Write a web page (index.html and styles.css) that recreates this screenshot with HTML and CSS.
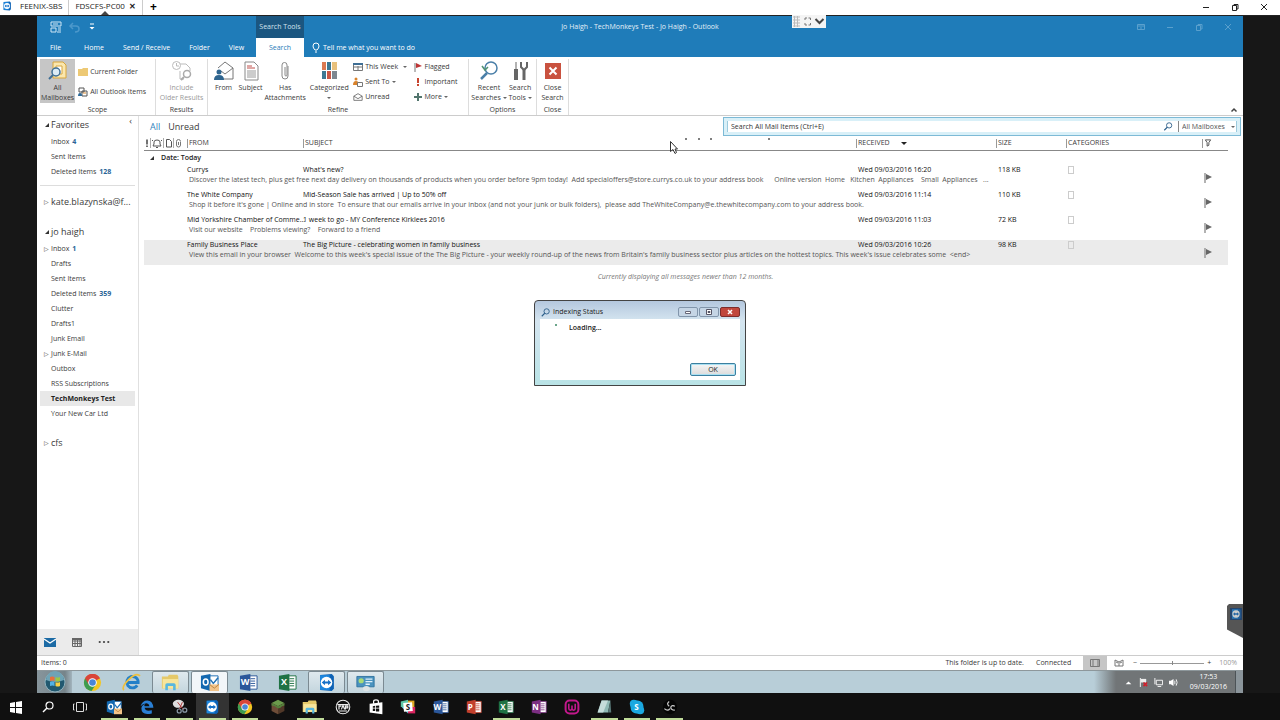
FILE: index.html
```
<!DOCTYPE html>
<html lang="en">
<head>
    <meta charset="UTF-8">
    <meta name="viewport" content="width=device-width, initial-scale=1.0">
    <title>FDSCFS-PC00</title>
    <link rel="stylesheet" href="styles.css">
</head>
<body>

    <!-- shared icons -->
    <svg class="sprite" aria-hidden="true">
        <symbol id="tv" viewBox="0 0 18 18">
            <path d="M3 2l11-1 2 2v12l-2 2-11-1z" fill="#0d62b5"/>
            <path d="M3 2l9 0v14l-9 0z" fill="#1e87de"/>
            <circle cx="9" cy="9" r="5.5" fill="#fff"/>
            <path d="M4.500 9l3-2.500v1.500h3V6.500l3 2.500-3 2.500V10h-3v1.500z" fill="#1470c8"/>
        </symbol>
        <symbol id="chrome" viewBox="0 0 20 20">
            <circle cx="10" cy="10" r="9" fill="#f3c622"/>
            <path d="M10 10L2.200 5.500A9 9 0 0 1 17.800 5.500z" fill="#d9453a"/>
            <path d="M10 10L2.200 5.500A9 9 0 0 0 9 19l4-6z" fill="#3d9c50"/>
            <path d="M10 5.500h7.800A9 9 0 0 0 2.200 5.500L6 12z" fill="#d9453a"/>
            <circle cx="10" cy="10" r="4.500" fill="#fff"/>
            <circle cx="10" cy="10" r="3.500" fill="#4a86d8"/>
        </symbol>
        <symbol id="folder" viewBox="0 0 22 20">
            <path d="M1 3h7l1-2h10l1 2v14H1z" fill="#e5c96a"/>
            <path d="M2 6h18v11H2z" fill="#f7e59b"/>
            <path d="M5 19v-6q0-2 2-2h8q2 0 2 2v6h-3v-5H8v5z" fill="#58b7df"/>
        </symbol>
        <symbol id="outlook" viewBox="0 0 20 20">
            <path d="M9 3h10v12H9z" fill="#fff" stroke="#1d6fb4"/>
            <path d="M11 7l3 4 5-6" fill="none" stroke="#1d6fb4" stroke-width="1.500"/>
            <path d="M1 3l10-2v18L1 16z" fill="#1268b0"/>
            <ellipse cx="6" cy="9.500" rx="2.500" ry="3.200" fill="none" stroke="#fff" stroke-width="1.600"/>
            <path d="M10 12h10v7H10z" fill="#f2c48a"/>
            <path d="M10 12l5 4 5-4" fill="none" stroke="#b98545"/>
        </symbol>
        <symbol id="sheet" viewBox="0 0 20 20">
            <path d="M10 3h9v14h-9z" fill="#fff" stroke="currentColor"/>
            <path d="M12 6h5M12 8.500h5M12 11h5M12 13.500h5" stroke="currentColor"/>
            <path d="M1 3l11-2v18L1 17z" fill="currentColor"/>
        </symbol>
        <symbol id="lens" viewBox="0 0 12 12">
            <circle cx="7.500" cy="4.500" r="3.500" fill="none" stroke="currentColor" stroke-width="1.200"/>
            <path d="M5 7L1 11" stroke="currentColor" stroke-width="1.500"/>
        </symbol>
        <symbol id="flag" viewBox="0 0 8 10">
            <path d="M1 0v10" stroke="#999" stroke-width="1.500"/>
            <path d="M2 1l6 3-6 3z" fill="#666"/>
        </symbol>
        <symbol id="min" viewBox="0 0 8 8"><path d="M1 4.500h6" stroke="currentColor"/></symbol>
        <symbol id="max" viewBox="0 0 8 8"><path d="M1.500 2.500h4v5h-4zM3 2.500v-1h4v4.500H5.500" fill="none" stroke="currentColor"/></symbol>
        <symbol id="close" viewBox="0 0 8 8"><path d="M1 1l6 6M7 1L1 7" stroke="currentColor"/></symbol>
        <symbol id="envelope" viewBox="0 0 12 10">
            <path d="M1 4l5-3 5 3v5H1zM1 4l5 3 5-3" fill="#fff" stroke="#666"/>
        </symbol>
    </svg>

    <header class="viewer-bar">
        <svg class="viewer-logo"><use href="#tv"/></svg>
        <a class="viewer-tab" href="#">FEENIX-SBS</a>
        <a class="viewer-tab current" href="#">FDSCFS-PC00 <b>&#10005;</b></a>
        <button class="new-tab" aria-label="New tab">+</button>
        <div class="viewer-controls">
            <button aria-label="Minimize"><svg><use href="#min"/></svg></button>
            <button aria-label="Restore"><svg><use href="#max"/></svg></button>
            <button aria-label="Close"><svg><use href="#close"/></svg></button>
        </div>
    </header>

    <div class="stage">
        <div class="remote">

            <div class="title-area">
                <h1>Jo Haigh - TechMonkeys Test - Jo Haigh - Outlook</h1>
                <div class="quick">
                    <svg viewBox="0 0 12 12"><path d="M1 1h10v4H1zM1 7h5v4H1zM8 7h3M8 9h3M7 11h4M3 3h5" fill="none" stroke="#cfe6f5"/></svg>
                    <svg viewBox="0 0 12 12"><path d="M2 5h6q3 0 3 3t-4 3M5 2L2 5l3 3" fill="none" stroke="#4c98cb" stroke-width="1.500"/></svg>
                    <svg viewBox="0 0 12 12"><path d="M4 3h4" stroke="#fff"/><path d="M3.500 6h5L6 8.500z" fill="#fff"/></svg>
                </div>
                <span class="context">Search Tools</span>
                <div class="window-controls">
                    <svg viewBox="0 0 8 8"><path d="M.5 1.500h7v5h-7zM.5 3h7M4 6V4" fill="none" stroke="currentColor"/></svg>
                    <svg><use href="#min"/></svg>
                    <svg><use href="#max"/></svg>
                    <svg><use href="#close"/></svg>
                </div>
                <nav class="tabs">
                    <a href="#">File</a>
                    <a href="#">Home</a>
                    <a href="#">Send / Receive</a>
                    <a href="#">Folder</a>
                    <a href="#">View</a>
                </nav>
                <a class="active-tab" href="#">Search</a>
                <a class="tell" href="#">
                    <svg viewBox="0 0 8 12"><path d="M3 8Q1 6 1 4a3 3 0 0 1 6 0q0 2-2 4zM3 10h2" fill="none" stroke="#fff"/></svg>
                    Tell me what you want to do
                </a>
            </div>

            <div class="ribbon">
                <section class="group scope">
                    <div class="tools">
                        <button class="big pressed">
                            <svg viewBox="0 0 20 20"><path d="M5 1h10l3 3v13H5z" fill="#fbe7ae" stroke="#d8a63c"/><path d="M8 5h6v8H8z" fill="#fff" stroke="#d8a63c"/><circle cx="8" cy="11" r="4" fill="#dcecf5" stroke="#3f6f95" stroke-width="1.500"/><path d="M5 14l-4 4" stroke="#3f6f95" stroke-width="2"/></svg>
                            <span>All<br>Mailboxes</span>
                        </button>
                        <div class="stack two">
                            <button><svg viewBox="0 0 10 10"><path d="M0 2h4l1-1h5v8H0z" fill="#edc975"/></svg>Current Folder</button>
                            <button><svg viewBox="0 0 10 10"><path d="M1 1h5v4H1zM4 4h5v5H4z" fill="#fff" stroke="#555"/><path d="M0 9q0-3 2-3t2 3z" fill="#2d6a99"/><path d="M5 6h3" stroke="#d88a30"/></svg>All Outlook Items</button>
                        </div>
                    </div>
                    <h2>Scope</h2>
                </section>
                <section class="group results">
                    <div class="tools">
                        <button class="big" disabled>
                            <svg viewBox="0 0 20 20"><path d="M8 3h6l4 4v3M8 10v8h4" fill="none" stroke="#bbb"/><circle cx="4.500" cy="4.500" r="4" fill="#fff" stroke="#bbb"/><path d="M4.500 2v3H7" fill="none" stroke="#bbb"/><circle cx="15" cy="13" r="3.500" fill="#fff" stroke="#aaa" stroke-width="1.500"/><path d="M12 16l-3 3" stroke="#aaa" stroke-width="2"/></svg>
                            <span>Include<br>Older Results</span>
                        </button>
                    </div>
                    <h2>Results</h2>
                </section>
                <section class="group refine">
                    <div class="tools">
                        <button class="big">
                            <svg viewBox="0 0 20 20"><path d="M4 7l7-6 8 6v11H7" fill="#fff" stroke="#777"/><path d="M19 7l-8 6-4-3" fill="none" stroke="#777"/><circle cx="5" cy="11" r="2.500" fill="#2f658f"/><path d="M0 19q0-5 5-5t5 5z" fill="#2f658f"/></svg>
                            <span>From</span>
                        </button>
                        <button class="big">
                            <svg viewBox="0 0 20 20"><path d="M4 1h9l4 4v14H4z" fill="#fff" stroke="#888"/><path d="M6 5h5M6 7h8" stroke="#c0504d"/><path d="M6 10h9M6 12h9M6 14h9M6 16h9" stroke="#999"/></svg>
                            <span>Subject</span>
                        </button>
                        <button class="big">
                            <svg viewBox="0 0 20 20"><path d="M13 5v10a3 3 0 0 1-6 0V4a2.500 2.500 0 0 1 5 0v10a1 1 0 0 1-2 0V6" fill="none" stroke="#888"/></svg>
                            <span>Has<br>Attachments</span>
                        </button>
                        <button class="big">
                            <svg viewBox="0 0 20 20"><path d="M3 1h4v8H3z" fill="#dc7a52"/><path d="M8 1h4v8H8zM3 10h4v8H3z" fill="#3d7892"/><path d="M13 1h5v8h-5z" fill="#e8c17d"/><path d="M8 10h4v8H8z" fill="#ca5745"/><path d="M13 10h5v8h-5z" fill="#7d8790"/></svg>
                            <span>Categorized<br><i class="caret"></i></span>
                        </button>
                        <div class="stack">
                            <button><svg viewBox="0 0 10 10"><path d="M.5 1.500h9v7h-9zM0 5h10M5 4v4" fill="#fff" stroke="#777"/><path d="M0 1h10v2H0z" fill="#3f6f95"/></svg>This Week <i class="caret away"></i></button>
                            <button><svg viewBox="0 0 10 10"><circle cx="3" cy="2" r="1.500" fill="#d9822b"/><path d="M0 8q0-4 3-4t3 4z" fill="#d9822b"/><path d="M4.500 5.500h5v4h-5z" fill="#fff" stroke="#777"/></svg>Sent To <i class="caret"></i></button>
                            <button><svg viewBox="0 0 12 10"><use href="#envelope"/></svg>Unread</button>
                        </div>
                        <div class="stack">
                            <button><svg viewBox="0 0 10 10"><path d="M2 1v9" stroke="#777"/><path d="M3 1l6 3-6 2z" fill="#bd3535"/></svg>Flagged</button>
                            <button><svg viewBox="0 0 10 10"><path d="M4 1h2v5H4zM4 7h2v2H4z" fill="#c8452f"/></svg>Important</button>
                            <button><svg viewBox="0 0 10 10"><path d="M5 1v8M1 5h8" stroke="#52756d" stroke-width="2"/></svg>More <i class="caret"></i></button>
                        </div>
                    </div>
                    <h2>Refine</h2>
                </section>
                <section class="group options">
                    <div class="tools">
                        <button class="big">
                            <svg viewBox="0 0 20 20"><circle cx="12" cy="7" r="6" fill="#fff" stroke="#4a7fa8" stroke-width="1.500"/><path d="M8 12l-6 6" stroke="#4a7fa8" stroke-width="2.500"/><path d="M3 5l3 4 3-3" fill="none" stroke="#4f9272" stroke-width="1.500"/></svg>
                            <span>Recent<br>Searches <i class="caret"></i></span>
                        </button>
                        <button class="big">
                            <svg viewBox="0 0 20 20"><path d="M6 1v8" stroke="#666"/><path d="M4 8h4v11H4z" fill="#666"/><path d="M14 8v11" stroke="#666" stroke-width="3"/><path d="M11 1v5l3 3 3-3V1" fill="none" stroke="#666" stroke-width="2"/></svg>
                            <span>Search<br>Tools <i class="caret"></i></span>
                        </button>
                    </div>
                    <h2>Options</h2>
                </section>
                <section class="group finish">
                    <div class="tools">
                        <button class="big">
                            <svg viewBox="0 0 20 20"><path d="M2 2h16v16H2z" fill="#c9523f"/><path d="M6.500 6.500l7 7M13.500 6.500l-7 7" stroke="#fff" stroke-width="2"/></svg>
                            <span>Close<br>Search</span>
                        </button>
                    </div>
                    <h2>Close</h2>
                </section>
                <button class="collapse" aria-label="Collapse the ribbon"><svg viewBox="0 0 8 8"><path d="M1.500 5.500L4 3l2.500 2.500" fill="none" stroke="#444" stroke-width="1.500"/></svg></button>
            </div>

            <div class="workspace">
                <nav class="folders">
                    <button class="fold" aria-label="Minimize the folder pane">&#8249;</button>
                    <h3 class="open">Favorites</h3>
                    <ul>
                        <li><a href="#">Inbox <b>4</b></a></li>
                        <li><a href="#">Sent Items</a></li>
                        <li><a href="#">Deleted Items <b>128</b></a></li>
                    </ul>
                    <hr>
                    <h3 class="closed">kate.blazynska@f...</h3>
                    <h3 class="open account">jo haigh</h3>
                    <ul>
                        <li class="closed"><a href="#">Inbox <b>1</b></a></li>
                        <li><a href="#">Drafts</a></li>
                        <li><a href="#">Sent Items</a></li>
                        <li><a href="#">Deleted Items <b>359</b></a></li>
                        <li><a href="#">Clutter</a></li>
                        <li><a href="#">Drafts1</a></li>
                        <li><a href="#">Junk Email</a></li>
                        <li class="closed"><a href="#">Junk E-Mail</a></li>
                        <li><a href="#">Outbox</a></li>
                        <li><a href="#">RSS Subscriptions</a></li>
                        <li class="selected"><a href="#">TechMonkeys Test</a></li>
                        <li><a href="#">Your New Car Ltd</a></li>
                    </ul>
                    <h3 class="closed account">cfs</h3>
                    <div class="modules">
                        <svg viewBox="0 0 12 10"><path d="M0 1h12v9H0z" fill="#1c6ba5"/><path d="M0 2l6 4 6-4" fill="none" stroke="#fff" stroke-width="1.200"/></svg>
                        <svg viewBox="0 0 12 10"><path d="M1.500 1.500h9v8h-9zM1 4h10M1 6.500h10M4 2v7M6.500 2v7M9 2v7" fill="none" stroke="#666"/><path d="M1 1h10v2H1z" fill="#666"/></svg>
                        <svg viewBox="0 0 14 10"><circle cx="2" cy="5" r="1.300" fill="#444"/><circle cx="7" cy="5" r="1.300" fill="#444"/><circle cx="12" cy="5" r="1.300" fill="#444"/></svg>
                    </div>
                </nav>

                <main>
                    <div class="filter-row">
                        <a class="on" href="#">All</a>
                        <a href="#">Unread</a>
                        <div class="search">
                            <input type="text" aria-label="Search" placeholder="Search All Mail Items (Ctrl+E)">
                            <svg><use href="#lens"/></svg>
                            <select aria-label="Search scope"><option>All Mailboxes</option></select>
                            <span class="drop"><i class="caret"></i></span>
                        </div>
                    </div>

                    <table>
                        <colgroup>
                            <col class="c-icons"><col class="c-from"><col><col class="c-received"><col class="c-size"><col class="c-categories"><col class="c-flag">
                        </colgroup>
                        <thead>
                            <tr>
                                <th class="marks"><svg viewBox="0 0 42 10"><path d="M3 1.500v5M3 7.500v1.500" stroke="#444" stroke-width="1.500"/><path d="M6.500 0v10M19.500 0v10M29.500 0v10" stroke="#aaa"/><path d="M9 8h8l-1-2V4q0-2-3-2t-3 2v2zM12 9.500h2M8 2l1 1M18 2l-1 1" fill="none" stroke="#555"/><path d="M22.500 1.500h3l2 2v5.500h-5z" fill="none" stroke="#555"/><path d="M36.500 4v3a1.500 1.500 0 0 1-4 0V3.500a1.500 1.500 0 0 1 4 0M34.500 4v3" fill="none" stroke="#777"/></svg></th>
                                <th>FROM</th>
                                <th>SUBJECT</th>
                                <th>RECEIVED <i class="caret sort"></i></th>
                                <th>SIZE</th>
                                <th>CATEGORIES</th>
                                <th><svg class="funnel" viewBox="0 0 8 9"><path d="M1 1h6L5 4v3L3 8V4z" fill="none" stroke="#444"/></svg></th>
                            </tr>
                        </thead>
                        <tbody class="date">
                            <tr><th colspan="7">Date: Today</th></tr>
                        </tbody>
                        <tbody>
                            <tr>
                                <td rowspan="2"></td><td>Currys</td><td>What's new?</td><td>Wed 09/03/2016 16:20</td><td>118 KB</td><td><i class="category"></i></td>
                                <td rowspan="2"><svg class="flag"><use href="#flag"/></svg></td>
                            </tr>
                            <tr class="preview"><td colspan="5">Discover the latest tech, plus get free next day delivery on thousands of products when you order before 9pm today!  Add specialoffers@store.currys.co.uk to your address book      Online version  Home   Kitchen  Appliances    Small  Appliances   ...</td></tr>
                        </tbody>
                        <tbody>
                            <tr>
                                <td rowspan="2"></td><td>The White Company</td><td>Mid-Season Sale has arrived | Up to 50% off</td><td>Wed 09/03/2016 11:14</td><td>110 KB</td><td><i class="category"></i></td>
                                <td rowspan="2"><svg class="flag"><use href="#flag"/></svg></td>
                            </tr>
                            <tr class="preview"><td colspan="5">Shop it before it's gone | Online and in store  To ensure that our emails arrive in your inbox (and not your junk or bulk folders),  please add TheWhiteCompany@e.thewhitecompany.com to your address book.</td></tr>
                        </tbody>
                        <tbody>
                            <tr>
                                <td rowspan="2"></td><td>Mid Yorkshire Chamber of Comme...</td><td>1 week to go - MY Conference Kirklees 2016</td><td>Wed 09/03/2016 11:03</td><td>72 KB</td><td><i class="category"></i></td>
                                <td rowspan="2"><svg class="flag"><use href="#flag"/></svg></td>
                            </tr>
                            <tr class="preview"><td colspan="5">Visit our website    Problems viewing?    Forward to a friend</td></tr>
                        </tbody>
                        <tbody class="selected">
                            <tr>
                                <td rowspan="2"></td><td>Family Business Place</td><td>The Big Picture - celebrating women in family business</td><td>Wed 09/03/2016 10:26</td><td>98 KB</td><td><i class="category"></i></td>
                                <td rowspan="2"><svg class="flag"><use href="#flag"/></svg></td>
                            </tr>
                            <tr class="preview"><td colspan="5">View this email in your browser  Welcome to this week's special issue of the The Big Picture - your weekly round-up of the news from Britain's family business sector plus articles on the hottest topics. This week's issue celebrates some  &lt;end&gt;</td></tr>
                        </tbody>
                    </table>
                    <p class="notice">Currently displaying all messages newer than 12 months.</p>
                </main>
            </div>

            <footer class="status">
                <span>Items: 0</span>
                <span class="sync">This folder is up to date.</span>
                <span>Connected</span>
                <div class="views">
                    <button class="pressed" aria-label="Normal view"><svg viewBox="0 0 10 8"><path d="M.5 .5h9v7h-9zM3 1v6M8 1v6" fill="none" stroke="#777"/></svg></button>
                    <button aria-label="Reading view"><svg viewBox="0 0 10 8"><path d="M1 1l4 2 4-2v6H1zM5 3v4M2 3l2 1M8 3L6 4" fill="none" stroke="#777"/></svg></button>
                </div>
                <span>&#8722;</span>
                <input type="range" aria-label="Zoom" min="10" max="190" value="100">
                <span>+</span>
                <span class="percent">100%</span>
            </footer>

            <div class="seven-bar">
                <button class="start" aria-label="Start"><svg viewBox="0 0 22 22"><circle cx="11" cy="11" r="10" fill="#21586f" stroke="#8fb3bf"/><path d="M2 9a9 9 0 0 1 18 0q-9 4-18 0z" fill="#6fa3b5"/><path d="M6 6q2-1 4.500 0v4q-2-1-4.500 0z" fill="#e8703a"/><path d="M11.500 6q2 1 4.500 0v4q-2 1-4.500 0z" fill="#9cc843"/><path d="M6 11q2-1 4.500 0v4q-2-1-4.500 0z" fill="#51b1e5"/><path d="M11.500 11q2 1 4.500 0v4q-2 1-4.500 0z" fill="#f6cf45"/></svg></button>
                <button aria-label="Chrome"><svg><use href="#chrome"/></svg></button>
                <button aria-label="Internet Explorer"><svg viewBox="0 0 20 20"><path d="M16 13a6 6 0 1 1 1-3H6" fill="none" stroke="#2380c8" stroke-width="3"/><path d="M2 18Q-1 15 7 7T19 3" fill="none" stroke="#edbf3c" stroke-width="1.800"/></svg></button>
                <button class="running" aria-label="Explorer"><svg><use href="#folder"/></svg></button>
                <button class="running front" aria-label="Outlook"><svg><use href="#outlook"/></svg></button>
                <button aria-label="Word"><svg class="word"><use href="#sheet"/></svg><em>W</em></button>
                <button aria-label="Excel"><svg class="excel"><use href="#sheet"/></svg><em>X</em></button>
                <button class="running" aria-label="TeamViewer"><svg><use href="#tv"/></svg></button>
                <button class="running" aria-label="Control Panel"><svg viewBox="0 0 22 20"><path d="M1 3h20v12H1z" fill="#4b93bf" stroke="#2b6f9c"/><circle cx="6" cy="8" r="3" fill="#a9db76"/><path d="M11 6h8M11 9h8M11 12h5" stroke="#dff1fa" stroke-width="1.500"/><ellipse cx="12" cy="17" rx="4" ry="3" fill="#dde3e5"/></svg></button>
                <div class="tray">
                    <svg viewBox="0 0 8 8"><path d="M1.500 5.500L4 3l2.500 2.500z" fill="#fff"/></svg>
                    <svg viewBox="0 0 10 10"><path d="M1.500 0v10" stroke="#fff"/><path d="M2 1h6v4H2z" fill="#eee"/><path d="M5 5l4 4M9 5L5 9" stroke="#d3202c" stroke-width="1.800"/></svg>
                    <svg viewBox="0 0 10 10"><path d="M2.500 2.500h7v5h-7zM4 9.500h4M1 0v7" fill="none" stroke="#fff"/></svg>
                    <svg viewBox="0 0 10 10"><path d="M0 3h2l3-2v8L2 7H0z" fill="#fff"/><path d="M6.500 3v4M8 1.500q2 3.500 0 7" fill="none" stroke="#fff"/></svg>
                    <time>17:53<br>09/03/2016</time>
                </div>
                <button class="peek" aria-label="Show desktop"></button>
            </div>

            <!-- floating things over the desktop -->
            <div class="session-menu">
                <svg viewBox="0 0 34 12"><path d="M1 2h7M1 5h7M1 8h7M1 11h7M2.500 1v11M5.500 1v11" stroke="#bbb"/><path d="M13 5V3h2M16.500 3h2v2M13 8v2h2M18.500 8v2h-2" fill="none" stroke="#777"/><path d="M23.500 4l4 4 4-4" fill="none" stroke="#444" stroke-width="2"/></svg>
            </div>
            <svg class="progress-dots" viewBox="0 0 86 2"><path d="M0 1h2M13 1h2M25 1h2M83 1h2" stroke="#555" stroke-width="1.500"/></svg>
            <svg class="pointer" viewBox="0 0 8 13"><path d="M.5 .5v10l2.500-2 2 4 1.500-1-1.500-3.500h2.500z" fill="#fff" stroke="#333"/></svg>
            <div class="side-handle"><svg><use href="#tv"/></svg></div>

            <div class="dialog" role="dialog" aria-labelledby="dialog-title">
                <div class="dialog-bar">
                    <svg><use href="#lens"/></svg>
                    <span id="dialog-title">Indexing Status</span>
                    <button aria-label="Minimize"><svg viewBox="0 0 10 8"><path d="M2.500 3.500h5v2h-5z" fill="#fff" stroke="#667"/></svg></button>
                    <button aria-label="Maximize"><svg viewBox="0 0 10 8"><path d="M2.500 1.500h5v5h-5zM4 3.500h2v1H4z" fill="#fff" stroke="#556"/></svg></button>
                    <button class="shut" aria-label="Close"><svg viewBox="0 0 10 8"><path d="M3 2l4 4M7 2L3 6" stroke="#fff" stroke-width="1.500"/></svg></button>
                </div>
                <div class="dialog-body">
                    <p><i></i>Loading...</p>
                    <button>OK</button>
                </div>
            </div>
        </div>
    </div>

    <footer class="ten-bar">
        <div class="system">
            <button aria-label="Start"><svg viewBox="0 0 16 16"><path d="M2 4l5-1v5H2zM8 3l6-1v6H8zM2 9h5v5l-5-1zM8 9h6v6l-6-1z" fill="#fff"/></svg></button>
            <button aria-label="Search"><svg class="white"><use href="#lens"/></svg></button>
            <button aria-label="Task view"><svg viewBox="0 0 16 16"><path d="M4.500 3.500h7v9h-7zM2.500 5h-1v6h1M13.500 5h1v6h-1" fill="none" stroke="#ddd"/></svg></button>
        </div>
        <div class="apps">
            <button class="running" aria-label="Outlook"><svg><use href="#outlook"/></svg></button>
            <button class="running" aria-label="Edge"><svg viewBox="0 0 20 20"><path d="M2 9Q4 2 10.500 2T18 11H7q1 5 9 3v4Q3 21 3 12q0-4 5-6-2 2-1 3h6q-1-4-5-3.500T2 9z" fill="#2a7fd4"/></svg></button>
            <button class="running" aria-label="Snipping Tool"><svg viewBox="0 0 20 20"><ellipse cx="8" cy="6" rx="7" ry="5" fill="#dedede"/><path d="M7 4l7 9M13 4l-4 9" stroke="#a33" stroke-width="1.200"/><circle cx="9" cy="15" r="2.500" fill="none" stroke="#8b9aa8" stroke-width="1.500"/><circle cx="16" cy="14" r="2.500" fill="none" stroke="#8b9aa8" stroke-width="1.500"/></svg></button>
            <button class="running front" aria-label="TeamViewer"><svg><use href="#tv"/></svg></button>
            <button class="running" aria-label="Chrome"><svg><use href="#chrome"/></svg></button>
            <button aria-label="Minecraft"><svg viewBox="0 0 20 20"><path d="M2 5l8-4 8 4-8 4z" fill="#6b9a4b"/><path d="M2 5l8 4v10l-8-4z" fill="#6e4d38"/><path d="M18 5l-8 4v10l8-4z" fill="#513828"/><path d="M2 5l8 4 8-4v3l-3 1-2 2-3 1-4-3-4-1z" fill="#55803c"/></svg></button>
            <button class="running" aria-label="Explorer"><svg><use href="#folder"/></svg></button>
            <button aria-label="Tap"><svg viewBox="0 0 20 20"><circle cx="10" cy="10" r="8.500" fill="none" stroke="#eee" stroke-width="1.300"/><path d="M3 7h14M5 13V9h3M10 8l-2 5M10 8l2 5M13 13V9h3v2h-3M5 15h10" fill="none" stroke="#eee" stroke-width="1.500"/></svg></button>
            <button aria-label="Store"><svg viewBox="0 0 20 20"><path d="M2 6l16-2v15L2 17z" fill="#fff"/><path d="M7 6V3q0-2 3-2t3 2v2" fill="none" stroke="#fff" stroke-width="1.500"/><path d="M6 9l3-.5V11H6zM10 8.500l4-.5v3h-4zM6 12h3v3H6zM10 12h4v3.500h-4z" fill="#111"/></svg></button>
            <button aria-label="Slack"><svg viewBox="0 0 20 20"><path d="M1 3l9-2v9H1z" fill="#5ec7a6"/><path d="M10 2h8v8h-8z" fill="#dfa823"/><path d="M2 10h8v8z" fill="#66c7e0"/><path d="M10 10h9v8h-9z" fill="#da2560"/><path d="M4 5l11-1 1 11-11 1z" fill="#fff"/></svg><em class="dark">S</em></button>
            <button aria-label="Word"><svg class="word"><use href="#sheet"/></svg><em>W</em></button>
            <button aria-label="PowerPoint"><svg class="point"><use href="#sheet"/></svg><em>P</em></button>
            <button class="running" aria-label="Excel"><svg class="excel"><use href="#sheet"/></svg><em>X</em></button>
            <button aria-label="OneNote"><svg class="note"><use href="#sheet"/></svg><em>N</em></button>
            <button aria-label="WampServer"><svg viewBox="0 0 20 20"><rect x="2" y="2" width="16" height="16" rx="5" fill="none" stroke="#c2188b" stroke-width="2.500"/><path d="M6 6v6q0 2 2 2t2-2V8v4q0 2 2 2t2-2V6" fill="none" stroke="#c2188b" stroke-width="2"/></svg></button>
            <button class="running" aria-label="Notepad"><svg viewBox="0 0 20 20"><path d="M7 2h11l-3 15H2z" fill="#8fb9b5"/><path d="M7 2h8L9 17H2z" fill="#c5dddb"/><path d="M15 17l3-15 1 15z" fill="#5a7a79"/></svg></button>
            <button class="running" aria-label="Skype"><svg viewBox="0 0 20 20"><rect x="2" y="2" width="16" height="16" rx="7" fill="#1ba8e0"/><circle cx="6" cy="6" r="5" fill="#1ba8e0"/><circle cx="14" cy="14" r="5" fill="#1ba8e0"/></svg><em class="wide">S</em></button>
            <button class="running" aria-label="OBS"><svg viewBox="0 0 20 20"><circle cx="10" cy="10" r="9" fill="#050505"/><path d="M9 3q-4 3 0 6M16 9q-3-2-5 1 0 4 5 4M3 12q4 4 7 0" fill="none" stroke="#ccc" stroke-width="1.500"/></svg></button>
        </div>
    </footer>

</body>
</html>
```

FILE: styles.css
```
* {
    box-sizing: border-box;
}
html, body {
    height: 100%;
    margin: 0;
}
body {
    display: flex;
    flex-direction: column;
    background: #171717;
    color: #3a3a3a;
    font: 7px/10px "Open Sans", "Noto Sans", sans-serif;
    overflow: hidden;
}
a {
    color: inherit;
    text-decoration: none;
}
button {
    margin: 0;
    padding: 0;
    border: 0;
    background: none;
    color: inherit;
    font: inherit;
}
h1, h2, h3, p, ul {
    margin: 0;
    padding: 0;
    font-size: inherit;
    font-weight: normal;
    list-style: none;
}
svg {
    display: block;
    flex: none;
    width: 12px;
    height: 12px;
}
.sprite {
    position: absolute;
    width: 0;
    height: 0;
}
.caret {
    display: inline-block;
    border: 2px solid transparent;
    border-top-color: #666;
    border-bottom: 0;
    vertical-align: middle;
}

/* viewer bar on top */
.viewer-bar {
    display: flex;
    align-items: center;
    flex: none;
    height: 16px;
    background: #fff;
    border-bottom: 1px solid #222;
    color: #222;
    font-size: 8px;
    line-height: 12px;
}
.viewer-logo {
    width: 10px;
    height: 10px;
    margin: 0 8px 3px 2px;
}
.viewer-tab {
    height: 15px;
    padding: 0 6px 0 0;
    border-right: 1px solid #ccc;
    white-space: nowrap;
}
.viewer-tab.current {
    position: relative;
    padding: 0 6px;
}
.viewer-tab.current::after {
    content: "";
    position: absolute;
    bottom: 0;
    left: 32px;
    border: 4px solid transparent;
    border-bottom-color: #444;
    border-top: 0;
}
.viewer-tab b {
    margin-left: 2px;
}
.new-tab {
    margin: 0 8px 2px 7px;
    font-size: 12px;
    line-height: 13px;
    font-weight: bold;
    color: #000;
}
.viewer-controls {
    display: flex;
    gap: 21px;
    margin: 0 12px 2px auto;
}
.viewer-controls svg {
    width: 8px;
    height: 8px;
}

/* remote desktop */
.stage {
    display: flex;
    flex: 1;
    min-height: 0;
    padding: 0 37px;
}
.remote {
    position: relative;
    display: flex;
    flex: 1;
    flex-direction: column;
    min-width: 0;
    background: #fff;
}
.title-area {
    display: grid;
    grid-template-columns: 219px 48px 1fr;
    grid-template-rows: 22px 19px;
    align-items: center;
    background: #1f7cb9;
    color: #fff;
}
.title-area h1 {
    grid-area: 1 / 1 / 2 / 4;
    text-align: center;
    color: #e4f0f8;
}
.quick {
    grid-area: 1 / 1;
    display: flex;
    gap: 6px;
    padding-left: 13px;
}
.context {
    grid-area: 1 / 2;
    height: 22px;
    line-height: 22px;
    text-align: center;
    white-space: nowrap;
    background: #1b5680;
    color: #d3e3ee;
}
.window-controls {
    grid-area: 1 / 3;
    justify-self: end;
    display: flex;
    gap: 21px;
    padding-right: 11px;
    color: #5aa0cd;
}
.window-controls svg {
    width: 8px;
    height: 8px;
}
.tabs {
    display: flex;
    padding-left: 4px;
}
.tabs a {
    padding: 0 10px 0 9px;
}
.tabs a:first-child {
    padding-right: 14px;
}
.active-tab {
    align-self: stretch;
    line-height: 20px;
    text-align: center;
    background: #fff;
    color: #1f7cb9;
}
.tell {
    display: flex;
    align-items: center;
    gap: 3px;
    padding-left: 8px;
}
.tell svg {
    width: 8px;
}

/* ribbon */
.ribbon {
    display: flex;
    flex: none;
    height: 59px;
    padding: 2px 0 0 3px;
    border-bottom: 1px solid #ccc;
}
.group {
    display: flex;
    flex-direction: column;
    height: 56px;
    border-right: 1px solid #ddd;
}
.group h2 {
    text-align: center;
    line-height: 10px;
}
.tools {
    display: flex;
    flex: 1;
    align-items: flex-start;
}
.scope {
    width: 116px;
}
.results {
    width: 52px;
}
.refine {
    width: 261px;
}
.refine .tools {
    padding-left: 2px;
}
.options {
    width: 68px;
}
.finish {
    width: 32px;
}
.results .tools, .finish .tools, .options .tools {
    justify-content: center;
}
.big {
    display: flex;
    flex-direction: column;
    align-items: center;
    height: 44px;
    min-width: 27px;
    padding: 0 1px;
    text-align: center;
    white-space: nowrap;
}
.big svg {
    width: 20px;
    height: 20px;
    margin: 2px 0;
}
.big:disabled {
    color: #999;
}
.refine .big:last-of-type {
    margin-left: 3px;
}
.options .big {
    padding: 0;
}
.pressed {
    background: #c6c6c6;
}
.stack {
    display: flex;
    flex-direction: column;
    width: 57px;
    margin-left: 4px;
}
.stack button {
    display: flex;
    align-items: center;
    gap: 2px;
    height: 15px;
    white-space: nowrap;
}
.stack.two {
    padding-top: 3px;
    margin-left: 3px;
}
.stack.two button {
    height: 20px;
}
.stack svg {
    width: 10px;
    height: 10px;
}
.away {
    margin-left: 3px;
}
.collapse {
    margin: auto 5px 1px auto;
}
.collapse svg {
    width: 8px;
    height: 8px;
}

/* folder pane */
.workspace {
    display: flex;
    flex: 1;
    min-height: 0;
}
.folders {
    position: relative;
    display: flex;
    flex-direction: column;
    flex: none;
    width: 102px;
    padding-top: 1px;
    border-right: 1px solid #e0e0e0;
}
.fold {
    position: absolute;
    top: 1px;
    right: 6px;
    font-size: 9px;
    line-height: 8px;
}
.folders h3 {
    position: relative;
    padding-left: 14px;
    font-size: 9px;
    line-height: 16px;
}
.folders h3 + ul {
    padding-top: 1px;
}
.folders hr {
    width: 95px;
    margin: 6px 3px 8px;
    border: 0;
    border-top: 1px solid #ddd;
}
.folders .account {
    margin-top: 14px;
}
.folders li {
    position: relative;
    height: 15px;
    margin: 0 3px;
    padding-left: 11px;
    line-height: 15px;
}
.folders li b {
    margin-left: 1px;
    color: #2a6496;
}
.folders li.selected {
    background: #e8e8e8;
    color: #222;
    font-weight: bold;
}
.open::before {
    content: "";
    position: absolute;
    top: 6px;
    left: 8px;
    border: 2px solid #333;
    border-top-color: transparent;
    border-left-color: transparent;
}
.closed::before {
    content: "\25B7";
    position: absolute;
    left: 7px;
    font: 6px/15px "DejaVu Sans", sans-serif;
}
li.closed::before {
    left: 4px;
}
.modules {
    display: flex;
    align-items: center;
    gap: 15px;
    height: 26px;
    margin-top: auto;
    padding-left: 7px;
    background: #ebebeb;
}

/* message list */
main {
    flex: 1;
    min-width: 0;
}
.filter-row {
    display: flex;
    align-items: center;
    gap: 8px;
    height: 21px;
    padding: 0 2px 0 11px;
    font-size: 9px;
}
.filter-row .on {
    color: #2f83bd;
}
.search {
    display: flex;
    align-items: center;
    width: 518px;
    height: 19px;
    margin-left: auto;
    padding-right: 4px;
    background: #d9f0f8;
    border: 1px solid #7dbad6;
    box-shadow: inset 0 0 0 3px #d9f0f8, inset 0 0 0 4px #9ccadd;
}
.search input {
    flex: 1;
    height: 11px;
    margin-left: 4px;
    padding: 0 3px;
    border: 0;
    background: #fff;
    font: 7px/10px "Open Sans", "Noto Sans", sans-serif;
    outline: 0;
}
.search input::placeholder {
    color: #333;
}
.search svg {
    width: 20px;
    height: 11px;
    padding: 1px 5px;
    background: #fff;
    color: #2c5f8a;
}
.search select {
    width: 51px;
    height: 11px;
    padding: 0 0 0 3px;
    appearance: none;
    border: 0;
    border-left: 1px solid #888;
    border-radius: 0;
    background: #fff;
    color: #555;
    font: 7px/10px "Open Sans", "Noto Sans", sans-serif;
}
.drop {
    display: flex;
    align-items: center;
    justify-content: center;
    width: 7px;
    height: 11px;
    background: #fff;
}
table {
    width: calc(100% - 20px);
    margin-left: 5px;
    border-collapse: collapse;
    table-layout: fixed;
}
.c-icons {
    width: 43px;
}
.c-from {
    width: 116px;
}
.c-received {
    width: 140px;
}
.c-size {
    width: 70px;
}
.c-categories {
    width: 136px;
}
.c-flag {
    width: 26px;
}
th, td {
    padding: 0;
    text-align: left;
    font-weight: normal;
    white-space: pre;
}
thead th {
    height: 13px;
    line-height: 12px;
    border-bottom: 1px solid #888;
}
thead th + th::before {
    content: "";
    display: inline-block;
    width: 1px;
    height: 9px;
    margin-right: 1px;
    background: #999;
    vertical-align: middle;
}
thead .marks svg {
    width: 42px;
    height: 10px;
}
.funnel {
    display: inline-block;
    width: 8px;
    height: 8px;
    vertical-align: middle;
}
.sort {
    margin-left: 10px;
    border-width: 3px;
    border-bottom: 0;
    border-top-color: #222;
}
.date th {
    position: relative;
    height: 15px;
    padding-left: 17px;
    color: #222;
    font-weight: 600;
}
.date th::before {
    content: "";
    position: absolute;
    top: 5px;
    left: 6px;
    border: 2px solid #333;
    border-top-color: transparent;
    border-left-color: transparent;
}
td {
    height: 10px;
    line-height: 10px;
    color: #111;
    font-weight: 500;
}
td:nth-child(n+4) {
    padding-left: 2px;
}
.preview td {
    height: 15px;
    padding-left: 2px;
    line-height: 9px;
    vertical-align: top;
    color: #555;
    font-weight: normal;
}
.selected td {
    background: #ebebeb;
}
.category {
    display: block;
    width: 6px;
    height: 8px;
    border: 1px solid #ccc;
}
.flag {
    width: 8px;
    height: 10px;
}
.notice {
    margin: 7px 11px 0 0;
    text-align: center;
    font-style: italic;
    color: #777;
}

/* status bar */
.status {
    display: flex;
    align-items: center;
    flex: none;
    height: 15px;
    padding: 0 6px 0 4px;
    border-top: 1px solid #ccc;
    background: #fff;
}
.sync {
    margin: 0 12px 0 auto;
}
.views {
    display: flex;
    margin: 0 2px 0 12px;
}
.views button {
    width: 24px;
    height: 14px;
    padding-left: 7px;
}
.views svg {
    width: 10px;
    height: 8px;
}
.status input {
    width: 64px;
    height: 10px;
    margin: 0 3px;
    appearance: none;
    background: linear-gradient(#999, #999) center / 100% 1px no-repeat;
}
.status input::-webkit-slider-thumb {
    appearance: none;
    width: 1px;
    height: 4px;
    background: #888;
}
.percent {
    margin-left: 8px;
    color: #999;
}

/* windows 7 taskbar */
.seven-bar {
    display: flex;
    flex: none;
    gap: 2px;
    height: 23px;
    border-top: 1px solid #8d979b;
    background: #b8ced8;
}
.seven-bar button {
    position: relative;
    display: flex;
    align-items: center;
    justify-content: center;
    width: 37px;
}
.seven-bar svg {
    width: 19px;
    height: 19px;
}
.seven-bar .start {
    width: 35px;
    background: linear-gradient(90deg, #87959c, #76848a 80%, #a2b4bd);
}
.seven-bar .start svg {
    width: 22px;
    height: 22px;
}
.seven-bar .running {
    border: 1px solid #7b8a92;
    border-bottom: 0;
    border-radius: 2px;
    background: linear-gradient(#dfe9ee, #c3d5dd);
}
.seven-bar .front {
    background: #f2f6f9;
}
.seven-bar .tray {
    display: flex;
    align-items: center;
    gap: 6px;
    margin-left: auto;
    padding: 0 8px 0 30px;
    background: linear-gradient(90deg, #b8ced8, #717577 22px);
    color: #fff;
}
.seven-bar .tray svg {
    width: 9px;
    height: 9px;
}
.tray time {
    margin-left: 6px;
    text-align: center;
}
.seven-bar .peek {
    width: 8px;
    margin-left: -2px;
    border-left: 1px solid #4c5357;
    background: #8b959b;
}

/* app letters on the office icons */
em {
    position: absolute;
    left: 50%;
    top: 50%;
    margin: -5px 0 0 -8px;
    width: 9px;
    text-align: center;
    color: #fff;
    font-size: 9px;
    font-weight: bold;
    font-style: normal;
}
.word {
    color: #2b579a;
}
.excel {
    color: #1f7244;
}
.point {
    color: #c2402d;
}
.note {
    color: #7b2e82;
}
.white {
    color: #fff;
}

/* windows 10 taskbar */
.ten-bar {
    display: flex;
    flex: none;
    height: 27px;
    background: #101010;
}
.system {
    display: flex;
    width: 98px;
}
.system button {
    width: 32px;
}
.system svg {
    width: 16px;
    height: 16px;
    margin: auto;
}
.system .white {
    width: 12px;
    height: 12px;
}
.apps {
    display: grid;
    grid-template-columns: repeat(18, 1fr);
    width: 588px;
}
.apps button {
    position: relative;
}
.apps svg {
    width: 16px;
    height: 16px;
    margin: auto;
}
.apps em {
    font-size: 8px;
}
.apps em.wide, .apps em.dark {
    margin-left: -5px;
}
.apps em.dark {
    color: #222;
}
.apps .front {
    background: #333;
}
.apps .running::after {
    content: "";
    position: absolute;
    right: 3px;
    bottom: 0;
    left: 3px;
    height: 2px;
    background: #c0dc9a;
}

/* floating */
.session-menu {
    position: absolute;
    top: -1px;
    left: 755px;
    width: 34px;
    height: 13px;
    background: #f4f4f4;
}
.session-menu svg {
    width: 34px;
}
.progress-dots {
    position: absolute;
    top: 122px;
    left: 648px;
    width: 86px;
    height: 2px;
}
.pointer {
    position: absolute;
    top: 125px;
    left: 633px;
    width: 8px;
    height: 13px;
}
.side-handle {
    position: absolute;
    right: 0;
    bottom: 55px;
    width: 16px;
    height: 34px;
    padding: 4px 0 0 3px;
    background: #555;
    clip-path: polygon(0 2px, 2px 0, 100% 0, 100% 100%, 0 75%);
}
.side-handle svg {
    background: #123f78;
    opacity: 0.7;
}

/* indexing dialog */
.dialog {
    position: absolute;
    top: 284px;
    left: calc(50% - 106px);
    width: 212px;
    height: 86px;
    padding: 0 5px 5px;
    border: 1px solid #444;
    border-radius: 4px 4px 0 0;
    background: linear-gradient(#b4c7de, #d5e5f0 20px, #b9e3e6);
    color: #222;
}
.dialog-bar {
    display: flex;
    align-items: center;
    gap: 1px;
    height: 18px;
    padding-top: 4px;
}
.dialog-bar > svg {
    width: 9px;
    height: 9px;
    margin-left: 1px;
    color: #2c5f8a;
}
.dialog-bar span {
    flex: 1;
    margin-left: 2px;
}
.dialog-bar button {
    width: 20px;
    height: 10px;
    border: 1px solid #8195ab;
    border-radius: 2px;
    background: #c5d5e5;
}
.dialog-bar button svg {
    width: 10px;
    height: 8px;
    margin: auto;
}
.dialog-bar .shut {
    border-color: #7c2d2d;
    background: #c1473d;
}
.dialog-body {
    display: flex;
    flex-direction: column;
    justify-content: space-between;
    height: 61px;
    padding: 4px;
    background: #fff;
}
.dialog-body p {
    position: relative;
    padding-left: 25px;
    font-weight: 600;
}
.dialog-body p i {
    position: absolute;
    top: 1px;
    left: 11px;
    width: 2px;
    height: 2px;
    background: #6ba58a;
}
.dialog-body button {
    align-self: flex-end;
    width: 46px;
    height: 13px;
    border: 1px solid #3c7f9f;
    border-radius: 2px;
    background: linear-gradient(#f5f5f5, #dcdcdc);
    box-shadow: inset 0 0 0 1px #a9e0f2;
}
```
